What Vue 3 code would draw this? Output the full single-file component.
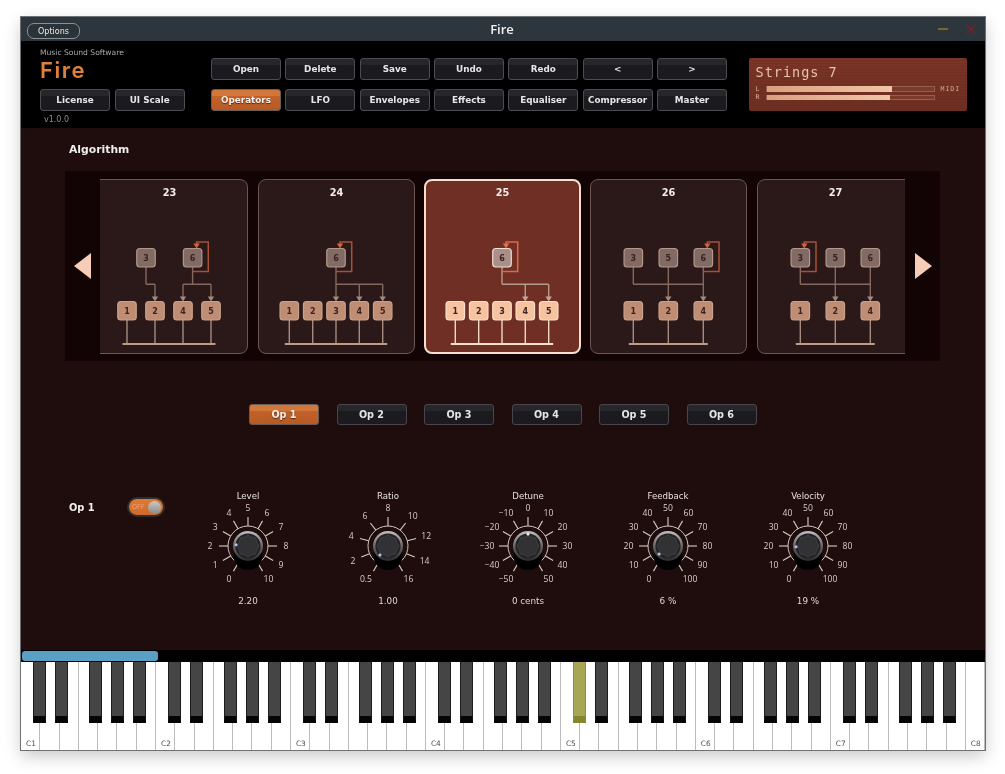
<script setup>
const brandButtons = ['License', 'UI Scale']
const fileButtons = ['Open', 'Delete', 'Save', 'Undo', 'Redo', '<', '>']
const pageButtons = ['Operators', 'LFO', 'Envelopes', 'Effects', 'Equaliser', 'Compressor', 'Master']
const opButtons = ['Op 1', 'Op 2', 'Op 3', 'Op 4', 'Op 5', 'Op 6']

// node centres inside a card, groups are the modulator -> carrier wires
const algorithms = [
  {
    num: 23,
    top: [{ id: 3, x: 55 }, { id: 6, x: 101.6, fb: true }],
    bottom: [{ id: 1, x: 36 }, { id: 2, x: 64 }, { id: 4, x: 92 }, { id: 5, x: 120 }],
    groups: [{ from: [55], to: [64] }, { from: [101.6], to: [92, 120] }]
  },
  {
    num: 24,
    top: [{ id: 6, x: 78, fb: true }],
    bottom: [{ id: 1, x: 31.3 }, { id: 2, x: 54.7 }, { id: 3, x: 78 }, { id: 4, x: 101.3 }, { id: 5, x: 124.7 }],
    groups: [{ from: [78], to: [78, 101.3, 124.7] }]
  },
  {
    num: 25,
    selected: true,
    top: [{ id: 6, x: 78, fb: true }],
    bottom: [{ id: 1, x: 31.3 }, { id: 2, x: 54.7 }, { id: 3, x: 78 }, { id: 4, x: 101.3 }, { id: 5, x: 124.7 }],
    groups: [{ from: [78], to: [101.3, 124.7] }]
  },
  {
    num: 26,
    top: [{ id: 3, x: 43.3 }, { id: 5, x: 78.3 }, { id: 6, x: 113.3, fb: true }],
    bottom: [{ id: 1, x: 43.3 }, { id: 2, x: 78.3 }, { id: 4, x: 113.3 }],
    groups: [{ from: [43.3, 78.3, 113.3], to: [78.3, 113.3] }]
  },
  {
    num: 27,
    top: [{ id: 3, x: 43.3, fb: true }, { id: 5, x: 78.3 }, { id: 6, x: 113.3 }],
    bottom: [{ id: 1, x: 43.3 }, { id: 2, x: 78.3 }, { id: 4, x: 113.3 }],
    groups: [{ from: [43.3, 78.3, 113.3], to: [78.3, 113.3] }]
  }
]

const TOP_Y = 69.5
const BOTTOM_Y = 122.5
const NODE = 18.5
const WIRE_Y = 105.3
const BUS_Y = 165

const wirePath = (alg) => {
  let d = ''
  for (const g of alg.groups) {
    const all = [...g.from, ...g.to]
    for (const x of g.from) d += `M${x} ${TOP_Y + NODE}V${WIRE_Y}`
    for (const x of g.to) d += `M${x} ${WIRE_Y}V118`
    d += `M${Math.min(...all)} ${WIRE_Y}H${Math.max(...all)}`
  }
  return d
}
const arrowTargets = (alg) => alg.groups.flatMap((g) => g.to)
const fbNode = (alg) => alg.top.find((n) => n.fb)
const fbPath = (x) => `M${x} 92.5H${x + 15.7}V63H${x + 4}V66`
const busStart = (alg) => alg.bottom[0].x - 4.5
const busEnd = (alg) => alg.bottom[alg.bottom.length - 1].x + 4.5

const KNOB_CY = 50

const polar = (deg, r) => {
  const a = (deg * Math.PI) / 180
  return { x: 70 + r * Math.sin(a), y: KNOB_CY - r * Math.cos(a) }
}

const makeKnob = (title, labels, value, angle) => {
  const step = 300 / (labels.length - 1)
  const ticks = labels.map((text, i) => {
    const deg = -150 + i * step
    const a = polar(deg, 20)
    const b = polar(deg, 29)
    const t = polar(deg, 38)
    const side = Math.abs(deg) < 1 ? 0 : Math.sign(deg)
    return { text, x1: a.x, y1: a.y, x2: b.x, y2: b.y, tx: t.x + side * (text.length - 1) * 1.5, ty: t.y + 3 }
  })
  return { title, ticks, value, angle, pip: polar(angle, 12) }
}

const knobs = [
  makeKnob('Level', ['0', '1', '2', '3', '4', '5', '6', '7', '8', '9', '10'], '2.20', -84),
  makeKnob('Ratio', ['0.5', '2', '4', '6', '8', '10', '12', '14', '16'], '1.00', -138),
  makeKnob('Detune', ['-50', '-40', '-30', '-20', '-10', '0', '10', '20', '30', '40', '50'], '0 cents', 0),
  makeKnob('Feedback', ['0', '10', '20', '30', '40', '50', '60', '70', '80', '90', '100'], '6 %', -132),
  makeKnob('Velocity', ['0', '10', '20', '30', '40', '50', '60', '70', '80', '90', '100'], '19 %', -93)
]

const arcStart = polar(-150, 20)
const arcEnd = polar(150, 20)
const arcPath = `M${arcStart.x} ${arcStart.y}A20 20 0 1 1 ${arcEnd.x} ${arcEnd.y}`

const starPoints = Array.from({ length: 16 }, (_, i) => {
  const p = polar(i * 22.5, i % 2 ? 9.4 : 11)
  return `${p.x},${p.y}`
}).join(' ')

// keyboard: C1 to C8, 50 white keys
const KEY_W = 135 / 7
const whiteKeys = Array.from({ length: 50 }, (_, i) => ({
  i,
  label: i % 7 === 0 ? `C${i / 7 + 1}` : ''
}))
const blackOffsets = [11.5, 33.5, 68, 90, 112]
const blackKeys = []
for (let oct = 0; oct < 7; oct++) {
  blackOffsets.forEach((off, n) => {
    blackKeys.push({ left: oct * 135 + off, active: oct === 4 && n === 0 })
  })
}
</script>

<template>
  <div class="page">
    <div class="window">
      <div class="titlebar">
        <div class="title-left"><button class="options">Options</button></div>
        <div class="title">Fire</div>
        <div class="title-right">
          <svg width="10" height="10" viewBox="0 0 10 10"><path d="M0 5H10" stroke="#8a7428" stroke-width="1.6" /></svg>
          <svg width="10" height="10" viewBox="0 0 10 10"><path d="M0.5 0.5L9.5 9.5M9.5 0.5L0.5 9.5" stroke="#7a2222" stroke-width="1.2" /></svg>
        </div>
      </div>

      <header class="header">
        <div class="brand">
          <div class="maker">Music Sound Software</div>
          <div class="logo">Fire</div>
          <div class="brand-buttons">
            <button v-for="b in brandButtons" :key="b" class="btn">{{ b }}</button>
          </div>
          <div class="version">v1.0.0</div>
        </div>

        <div class="button-grid">
          <button v-for="b in fileButtons" :key="b" class="btn">{{ b }}</button>
          <button v-for="b in pageButtons" :key="b" class="btn" :class="{ active: b === 'Operators' }">{{ b }}</button>
        </div>

        <div class="display">
          <div class="preset">Strings 7</div>
          <div class="meters">
            <div class="meter-row">
              <span class="channel">L</span>
              <div class="track"><div class="fill" :style="{ width: '75%' }"></div></div>
              <span class="midi">MIDI</span>
            </div>
            <div class="meter-row">
              <span class="channel">R</span>
              <div class="track"><div class="fill" :style="{ width: '74%' }"></div></div>
              <span class="midi"></span>
            </div>
          </div>
        </div>
      </header>

      <main class="main">
        <h2 class="heading">Algorithm</h2>

        <div class="strip">
          <div class="nav"><div class="arrow-left"></div></div>
          <div class="viewport">
            <div class="cards">
              <div v-for="alg in algorithms" :key="alg.num" class="card" :class="{ selected: alg.selected }">
                <svg class="diagram" width="157" height="175" viewBox="0 0 157 175">
                  <text class="card-num" x="78.5" y="17" text-anchor="middle">{{ alg.num }}</text>

                  <path class="wire" :d="wirePath(alg)" fill="none" />
                  <polygon
                    v-for="x in arrowTargets(alg)"
                    :key="x"
                    class="wire-head"
                    :points="`${x - 3.2},117.5 ${x + 3.2},117.5 ${x},122.5`"
                  />

                  <template v-if="fbNode(alg)">
                    <path class="feedback" :d="fbPath(fbNode(alg).x)" fill="none" />
                    <polygon
                      class="feedback-head"
                      :points="`${fbNode(alg).x + 0.8},64.5 ${fbNode(alg).x + 7.2},64.5 ${fbNode(alg).x + 4},69.5`"
                    />
                  </template>

                  <line
                    v-for="n in alg.bottom"
                    :key="n.id"
                    class="drop"
                    :x1="n.x"
                    :x2="n.x"
                    :y1="BOTTOM_Y + NODE"
                    :y2="BUS_Y"
                  />
                  <line class="bus" :x1="busStart(alg)" :x2="busEnd(alg)" :y1="BUS_Y" :y2="BUS_Y" />

                  <g v-for="n in alg.top" :key="n.id">
                    <rect class="node-mod" :x="n.x - NODE / 2" :y="TOP_Y" :width="NODE" :height="NODE" rx="3" />
                    <text class="node-text" :x="n.x" :y="TOP_Y + 12.6" text-anchor="middle">{{ n.id }}</text>
                  </g>
                  <g v-for="n in alg.bottom" :key="n.id">
                    <rect class="node-car" :x="n.x - NODE / 2" :y="BOTTOM_Y" :width="NODE" :height="NODE" rx="3" />
                    <text class="node-text" :x="n.x" :y="BOTTOM_Y + 12.6" text-anchor="middle">{{ n.id }}</text>
                  </g>
                </svg>
              </div>
            </div>
          </div>
          <div class="nav"><div class="arrow-right"></div></div>
        </div>

        <div class="op-row">
          <button v-for="b in opButtons" :key="b" class="btn op-btn" :class="{ active: b === 'Op 1' }">{{ b }}</button>
        </div>

        <div class="op-panel">
          <div class="op-side">
            <div class="op-name">Op 1</div>
            <div class="toggle">
              <span class="toggle-text">OFF</span>
              <span class="toggle-thumb"></span>
            </div>
          </div>

          <div class="knobs">
            <div v-for="k in knobs" :key="k.title" class="knob">
              <div class="knob-title">{{ k.title }}</div>
              <svg class="knob-svg" width="140" height="96" viewBox="0 0 140 96">
                <defs>
                  <linearGradient id="knobRing" x1="0" y1="0" x2="0" y2="1">
                    <stop offset="0" stop-color="#c0c0c0" />
                    <stop offset="0.55" stop-color="#606060" />
                    <stop offset="1" stop-color="#2c2c2c" />
                  </linearGradient>
                </defs>
                <path class="knob-arc" :d="arcPath" fill="none" />
                <line
                  v-for="t in k.ticks"
                  :key="t.text"
                  class="knob-tick"
                  :x1="t.x1"
                  :y1="t.y1"
                  :x2="t.x2"
                  :y2="t.y2"
                />
                <text
                  v-for="t in k.ticks"
                  :key="t.text"
                  class="knob-label"
                  :x="t.tx"
                  :y="t.ty"
                  text-anchor="middle"
                >{{ t.text.replace('-', '−') }}</text>
                <ellipse cx="70" :cy="KNOB_CY + 10" rx="14.5" ry="14" fill="#000" />
                <circle cx="70" :cy="KNOB_CY" r="15" fill="url(#knobRing)" />
                <circle cx="70" :cy="KNOB_CY" r="12.6" fill="#242426" />
                <polygon :points="starPoints" fill="#323234" stroke="#474749" stroke-width="0.7" />
                <circle :cx="k.pip.x" :cy="k.pip.y" r="1.5" :fill="k.angle === 0 ? '#f2f2f2' : '#a9c8f2'" />
              </svg>
              <div class="knob-value">{{ k.value }}</div>
            </div>
          </div>
        </div>
      </main>

      <div class="scroll-strip"><div class="scroll-thumb"></div></div>

      <div class="keyboard">
        <div v-for="w in whiteKeys" :key="w.i" class="white-key" :style="{ width: KEY_W + 'px' }">
          <span v-if="w.label" class="key-label">{{ w.label }}</span>
        </div>
        <div
          v-for="b in blackKeys"
          :key="b.left"
          class="black-key"
          :class="{ active: b.active }"
          :style="{ left: b.left + 'px' }"
        ></div>
      </div>
    </div>
  </div>
</template>

<style>
html, body {
  margin: 0;
  background: #fff;
}
</style>

<style scoped>
.page {
  height: 774px;
  box-sizing: border-box;
  padding: 17px 20px 0 21px;
  overflow: hidden;
  font-family: "DejaVu Sans", sans-serif;
}

.window {
  width: 964px;
  height: 733px;
  display: flex;
  flex-direction: column;
  box-shadow: 0 0 0 1px #6d7174, 0 6px 16px rgba(0, 0, 0, 0.22);
  filter: blur(0.3px);
}

.titlebar {
  height: 24px;
  flex: none;
  background: #2d363c;
  display: grid;
  grid-template-columns: 1fr auto 1fr;
  align-items: center;
}

.title-left {
  padding-left: 6px;
}

.options {
  width: 53px;
  height: 16px;
  padding: 0;
  background: #2a3338;
  border: 1px solid #8b9194;
  border-radius: 7px;
  color: #e8e8e8;
  font: 400 8px "DejaVu Sans", sans-serif;
}

.title {
  color: #f0f0f0;
  font-family: "Open Sans", sans-serif;
  font-size: 13px;
  font-weight: 600;
  padding-right: 2px;
}

.title-right {
  display: flex;
  justify-content: flex-end;
  gap: 18px;
  padding-right: 9px;
}

.header {
  height: 87px;
  flex: none;
  background: #000;
  display: flex;
}

.brand {
  width: 190px;
  flex: none;
  box-sizing: border-box;
  padding: 6px 0 0 19px;
}

.maker {
  height: 12px;
  line-height: 12px;
  color: #a8a8a8;
  font-size: 7.6px;
}

.logo {
  height: 21px;
  line-height: 21px;
  margin-top: 1px;
  color: #e07f3c;
  font-family: Inter, "DejaVu Sans", sans-serif;
  font-size: 22px;
  font-weight: 600;
  letter-spacing: 1.5px;
}

.brand-buttons {
  display: flex;
  gap: 4.7px;
  margin-top: 8px;
}

.brand-buttons .btn {
  width: 70px;
  height: 22px;
}

.version {
  margin: 4px 0 0 4px;
  color: #8b8b8b;
  font-size: 8px;
}

.button-grid {
  width: 516px;
  flex: none;
  display: grid;
  grid-template-columns: repeat(7, 70px);
  grid-template-rows: 22px 22px;
  column-gap: 4.33px;
  row-gap: 8.5px;
  padding-top: 17px;
}

.btn {
  padding: 0;
  border: 1px solid #4b4d53;
  border-radius: 3px;
  background: linear-gradient(#27272b 0, #27272b 30%, #1b1b1f 32%, #1b1b1f 100%);
  color: #e6e6e6;
  font: 700 8.8px "DejaVu Sans", sans-serif;
}

.btn.active {
  border-color: #6c5c58;
  background: linear-gradient(#d2773a 0, #d2773a 30%, #c0622a 32%, #b95a24 100%);
  color: #f6f1ee;
  text-shadow: 0 1px 1px rgba(60, 20, 0, 0.8);
}

.display {
  width: 218.5px;
  height: 52.5px;
  flex: none;
  box-sizing: border-box;
  margin: 17px 0 0 21.5px;
  padding: 5px 6px 0 7px;
  border-radius: 2px;
  background:
    repeating-linear-gradient(#0000 0, #0000 2px, rgba(0, 0, 0, 0.05) 2px, rgba(0, 0, 0, 0.05) 3px),
    linear-gradient(#7a3526, #6e2e22);
}

.preset {
  height: 18px;
  line-height: 18px;
  color: #e9c3aa;
  font-family: "DejaVu Sans Mono", monospace;
  font-size: 13.5px;
  letter-spacing: 1px;
}

.meters {
  margin-top: 3.5px;
}

.meter-row {
  height: 8.5px;
  display: flex;
  align-items: center;
}

.channel {
  width: 10px;
  color: #e0b8a0;
  font-family: "DejaVu Sans Mono", monospace;
  font-size: 6.5px;
}

.track {
  width: 169px;
  height: 5.5px;
  flex: none;
  box-sizing: border-box;
  border: 1px solid #93604f;
  background: #7c3a2b;
}

.fill {
  height: 100%;
  margin: -1px 0;
  padding: 1px 0;
  background: linear-gradient(90deg, #d9a07e, #efc6a6);
}

.midi {
  margin-left: 6px;
  color: #d7ae98;
  font-family: "DejaVu Sans Mono", monospace;
  font-size: 6.5px;
  letter-spacing: 1px;
}

.main {
  height: 522px;
  flex: none;
  background: #1f0c0c;
  overflow: hidden;
}

.heading {
  margin: 0;
  height: 43px;
  line-height: 43px;
  padding-left: 48px;
  color: #eeeeee;
  font-size: 10.8px;
  font-weight: 700;
}

.strip {
  width: 875px;
  height: 190px;
  margin-left: 44px;
  background: #120404;
  display: flex;
}

.nav {
  width: 35px;
  flex: none;
  display: flex;
  align-items: center;
  justify-content: center;
}

.arrow-left {
  width: 0;
  height: 0;
  margin: 0 1px 0 0;
  border-style: solid;
  border-width: 13px 17.5px 13px 0;
  border-color: transparent #f8cdb8 transparent transparent;
}

.arrow-right {
  width: 0;
  height: 0;
  margin: 0 0 0 1px;
  border-style: solid;
  border-width: 13px 0 13px 17.5px;
  border-color: transparent transparent transparent #f8cdb8;
}

.viewport {
  width: 805px;
  flex: none;
  margin: 8px 0 7px;
  overflow: hidden;
}

.cards {
  display: flex;
  gap: 9.33px;
  margin-left: -8.8px;
}

.card {
  width: 157px;
  height: 175px;
  flex: none;
  box-sizing: border-box;
  position: relative;
  border: 1px solid #6d5551;
  border-radius: 8px;
  background: #2b1818;
}

.card.selected {
  border: 2px solid #f7dfcd;
  background: #702f25;
}

.diagram {
  position: absolute;
  left: -1px;
  top: -1px;
}

.card.selected .diagram {
  left: -2px;
  top: -2px;
}

.card-num {
  fill: #f2eeea;
  font-size: 9.8px;
  font-weight: 700;
}

.wire {
  stroke: #86695d;
  stroke-width: 1.4;
}

.wire-head {
  fill: #a18a7c;
}

.feedback {
  stroke: #a85038;
  stroke-width: 1.5;
}

.feedback-head {
  fill: #cf6341;
}

.drop {
  stroke: #a68c7f;
  stroke-width: 1.4;
}

.bus {
  stroke: #bd9b87;
  stroke-width: 2;
}

.node-mod {
  fill: #826a65;
  stroke: #b39888;
  stroke-width: 1.2;
}

.node-car {
  fill: #be8d73;
  stroke: #c8a28b;
  stroke-width: 1.2;
}

.node-text {
  fill: #3a2320;
  font-size: 8px;
  font-weight: 700;
}

.card.selected .wire {
  stroke: #b39c8e;
}

.card.selected .wire-head {
  fill: #bfa697;
}

.card.selected .feedback {
  stroke: #dd6a47;
}

.card.selected .feedback-head {
  fill: #e4704b;
}

.card.selected .drop {
  stroke: #f2d8c6;
}

.card.selected .bus {
  stroke: #f7dfcd;
}

.card.selected .node-mod {
  fill: #a98f88;
  stroke: #f1ded2;
}

.card.selected .node-car {
  fill: #f6c3a0;
  stroke: #fbdfcb;
}

.op-row {
  display: flex;
  gap: 17.5px;
  margin: 43px 0 0 228px;
}

.op-btn {
  width: 70px;
  height: 21px;
  flex: none;
  border-color: #49454d;
  font-size: 9.6px;
}

.op-panel {
  display: flex;
  margin-top: 65px;
  padding-left: 48px;
}

.op-side {
  width: 130px;
  height: 20px;
  flex: none;
  margin-top: 7px;
  display: flex;
  align-items: center;
}

.op-name {
  width: 58px;
  flex: none;
  color: #f0f0f0;
  font-size: 9.8px;
  font-weight: 700;
}

.toggle {
  width: 34px;
  height: 16px;
  flex: none;
  display: flex;
  align-items: center;
  justify-content: space-between;
  box-sizing: border-box;
  padding: 0 2px 0 3px;
  border-radius: 8px;
  background: linear-gradient(#dd7a34, #cd6a2a);
  box-shadow: 0 0 0 2px #2d2d30;
  margin-left: 2px;
}

.toggle-text {
  color: #efa77c;
  font-size: 6.5px;
}

.toggle-thumb {
  width: 13px;
  height: 13px;
  border-radius: 50%;
  background: linear-gradient(#c8c8c8, #8b8b8b);
}

.knobs {
  display: flex;
  margin-left: -21px;
}

.knob {
  width: 140px;
  flex: none;
  display: flex;
  flex-direction: column;
  align-items: center;
}

.knob-svg {
  display: block;
  margin-top: -6px;
}

.knob-title {
  height: 12px;
  line-height: 12px;
  color: #e6e2e0;
  font-size: 8.6px;
}

.knob-arc {
  stroke: #d0c6c1;
  stroke-width: 1;
}

.knob-tick {
  stroke: #d6cec9;
  stroke-width: 1.1;
}

.knob-label {
  fill: #d5cfcb;
  font-family: "Open Sans", sans-serif;
  font-size: 8.6px;
}

.knob-value {
  margin-top: 4px;
  height: 10px;
  line-height: 10px;
  color: #dedad7;
  font-size: 8.8px;
}

.scroll-strip {
  height: 12px;
  flex: none;
  box-sizing: border-box;
  padding: 1px 0 1px 1px;
  background: #000;
}

.scroll-thumb {
  width: 136px;
  height: 10px;
  border-radius: 3px;
  background: #5a9fc4;
}

.keyboard {
  flex: 1;
  position: relative;
  display: flex;
  overflow: hidden;
  background: #fff;
}

.white-key {
  flex: none;
  box-sizing: border-box;
  position: relative;
  border-right: 1px solid #bcbcbc;
}

.key-label {
  position: absolute;
  left: 5px;
  bottom: 2px;
  color: #4c4c4c;
  font-size: 7.4px;
}

.black-key {
  position: absolute;
  top: 0;
  width: 13px;
  height: 61px;
  box-sizing: border-box;
  border-left: 1.5px solid #1c1c1c;
  border-right: 1.5px solid #1c1c1c;
  border-bottom: 7px solid #050505;
  background: #454545;
}

.black-key.active {
  border-left-color: #8d8d3e;
  border-right-color: #8d8d3e;
  border-bottom-color: #85852f;
  background: #a6a655;
}
</style>
